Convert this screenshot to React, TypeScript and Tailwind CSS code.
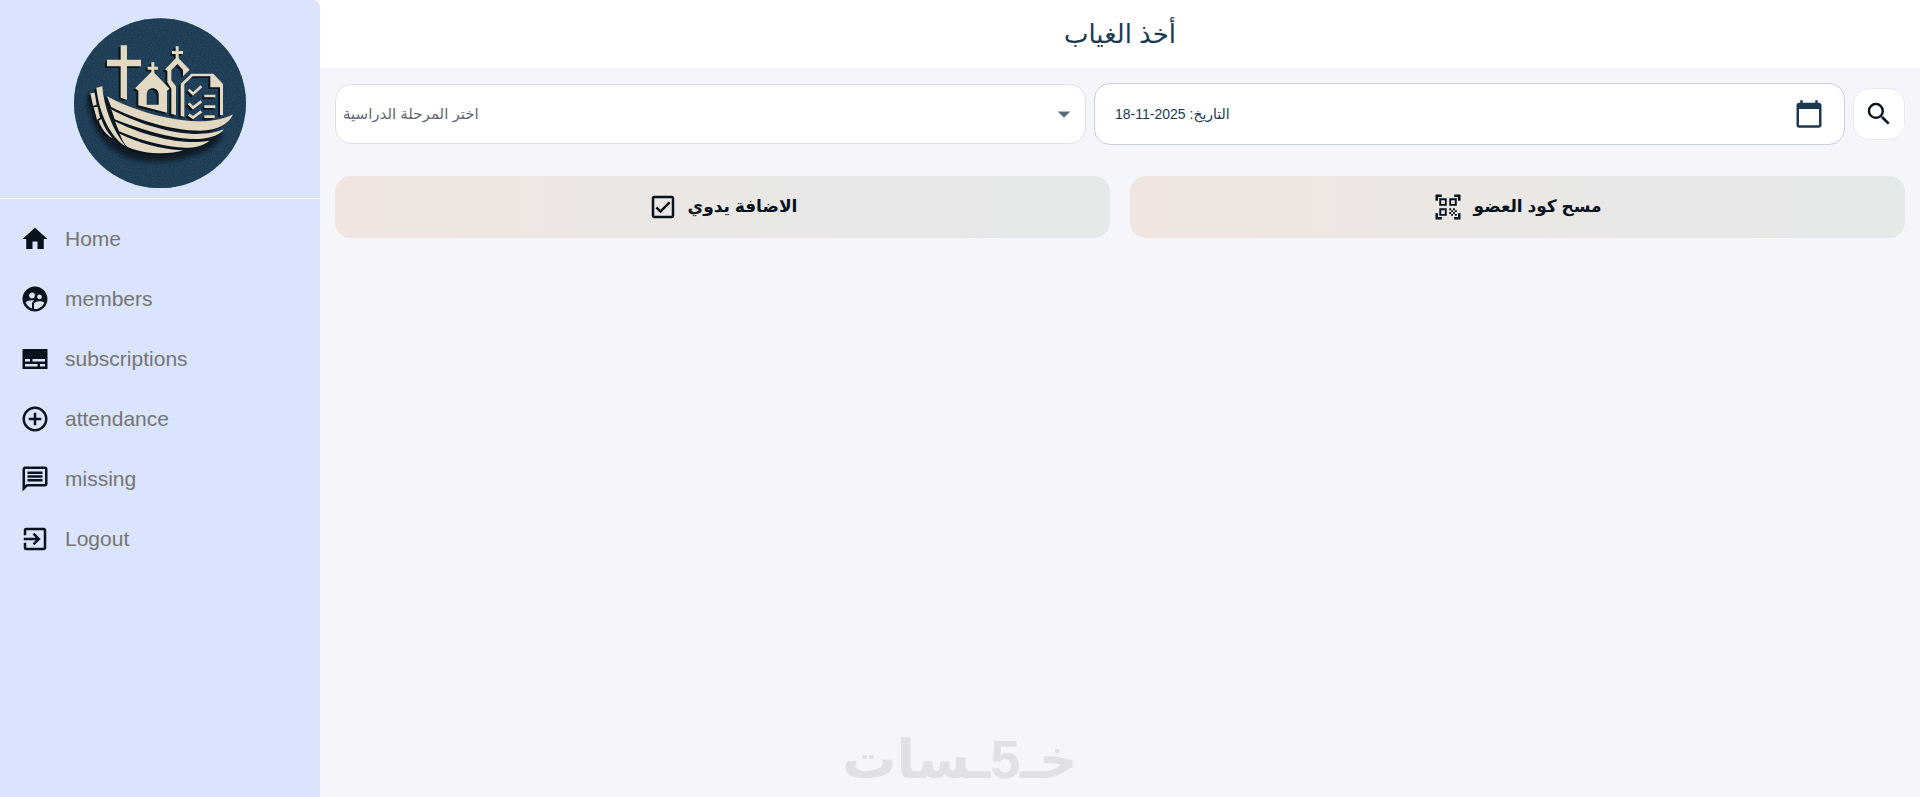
import type { ReactNode } from "react";
import {
  MdAddCircleOutline,
  MdArrowDropDown,
  MdCalendarToday,
  MdExitToApp,
  MdHome,
  MdOutlineCheckBox,
  MdOutlineMessage,
  MdQrCodeScanner,
  MdSearch,
  MdSupervisedUserCircle,
} from "react-icons/md";

const ICON_SIZE = 30;

interface NavItem {
  label: string;
  icon: ReactNode;
}

// Sharp-cornered subtitles icon, the md set only has the rounded one
const SubtitlesSharp = () => (
  <svg viewBox="0 0 24 24" width={ICON_SIZE} height={ICON_SIZE} fill="currentColor" aria-hidden="true">
    <path d="M22 4H2v16h20V4zM4 12h4v2H4v-2zm10 6H4v-2h10v2zm6 0h-4v-2h4v2zm0-4H10v-2h10v2z" />
  </svg>
);

const navItems: NavItem[] = [
  { label: "Home", icon: <MdHome size={ICON_SIZE} /> },
  { label: "members", icon: <MdSupervisedUserCircle size={ICON_SIZE} /> },
  { label: "subscriptions", icon: <SubtitlesSharp /> },
  { label: "attendance", icon: <MdAddCircleOutline size={ICON_SIZE} /> },
  { label: "missing", icon: <MdOutlineMessage size={ICON_SIZE} /> },
  { label: "Logout", icon: <MdExitToApp size={ICON_SIZE} /> },
];

const ArkShapes = () => (
  <>
    {/* Cross */}
    <path d="M182 135h19v43h42v20h-42v100l-19-6v-94h-41v-20h41z" />
    {/* Small church */}
    <path
      fillRule="evenodd"
      d="M274 186h9v13h11v9h-11v10l46 47-8 6v66l-86-22v-44l-10-7 49-50v-6h-11v-9h11zM260 313h36v-30c0-26-36-26-36 0z"
    />
    {/* Tall church */}
    <path d="M347 138h9v14h13v9h-13v13l33 34-20 20v-19l-17-18-18 18v31l14 18v86l-14-3v-76l-12-19v-34l-7-5 32-33v-13h-11v-9h11z" />
    {/* Checklist */}
    <path d="M362 347v-97l32-30h66l29 31v93l-9 1v-84h-29v-33h-53l-25 24v97z" />
    <path
      d="M386 268l13 13 25-23M386 309l13 13 25-19M386 343l13 9 25-19M433 287h33M433 319h33M433 349h31"
      fill="none"
      stroke="currentColor"
      strokeWidth="8"
    />
    {/* Hull */}
    <path d="M141 287c60 36 180 74 270 76 50 1 85-9 108-21-10 26-44 49-98 49-90 0-205-38-268-72z" />
    <path d="M154 327c60 35 160 70 246 74 40 1 66-5 92-14-18 23-58 31-100 29-80-4-170-37-228-59z" />
    <path d="M165 363c60 31 150 60 222 62 26 1 42-1 62-4-24 20-60 23-94 20-66-6-130-28-178-48z" />
    <path d="M179 400c56 27 120 46 190 50-40 14-120 12-166-10-10-8-18-24-24-40z" />
    <path d="M109 262l18-4c4 60 30 130 69 179-40-24-78-90-87-175z" />
    <path d="M91 279l13-2 6 36-11 3zM101 321l12-1 7 32-9 6zM116 361l8-5c8 24 20 42 34 58-18-10-34-28-42-53z" />
  </>
);

const ArkLogo = () => (
  <svg viewBox="42 53 516 511" className="w-[172px]" role="img" aria-label="Church ark">
    <defs>
      <filter id="soft" x="-20%" y="-20%" width="140%" height="140%">
        <feGaussianBlur stdDeviation="7" />
      </filter>
      <filter id="grain">
        <feTurbulence type="fractalNoise" baseFrequency="0.3" numOctaves="2" seed="4" />
        <feColorMatrix values="0 0 0 0 0.02  0 0 0 0 0.06  0 0 0 0 0.1  4 0 0 0 -1.6" />
        <feComposite in2="SourceGraphic" operator="in" />
      </filter>
    </defs>
    <ellipse cx="300" cy="308.500" rx="258" ry="255" fill="#1a3a56" />
    <ellipse cx="300" cy="308.500" rx="258" ry="255" filter="url(#grain)" />
    {/* Shadow under the hull */}
    <path
      d="M80 290l40-10 60 40 200 60 110 20c-20 40-60 64-150 80-70 10-130 0-170-24-50-34-80-90-90-166z"
      fill="#07131d"
      opacity="0.85"
      filter="url(#soft)"
    />
    <g className="text-[#07131d]" fill="currentColor" transform="translate(-6 5)">
      <ArkShapes />
    </g>
    <g className="text-[#e3d8c2]" fill="currentColor">
      <ArkShapes />
    </g>
  </svg>
);

const Sidebar = () => (
  <aside className="w-80 shrink-0 rounded-tr-lg bg-[#dae4fd]">
    <div className="flex justify-center border-b border-white pt-[18px] pb-2.5">
      <ArkLogo />
    </div>
    <nav className="pt-2.5">
      <ul>
        {navItems.map((item) => (
          <li key={item.label}>
            <a href="#" className="flex h-[60px] items-center gap-[15px] pl-5 text-[#06121c]">
              {item.icon}
              <span className="text-[21px] leading-7 text-[#757575]">{item.label}</span>
            </a>
          </li>
        ))}
      </ul>
    </nav>
  </aside>
);

const Filters = () => (
  <div className="grid grid-cols-[1fr_1fr_auto] items-center gap-2">
    <div className="grid items-center">
      <select
        aria-label="المرحلة الدراسية"
        defaultValue=""
        className="col-start-1 row-start-1 h-[60px] w-full appearance-none rounded-2xl border border-[#dfe1e6] bg-white px-[7px] text-[15px] text-[#5f6877]"
      >
        <option value="">اختر المرحلة الدراسية</option>
      </select>
      <MdArrowDropDown
        size={ICON_SIZE}
        className="pointer-events-none col-start-1 row-start-1 mr-[7px] justify-self-end text-[#5f6877]"
      />
    </div>
    <button
      type="button"
      className="flex h-[62px] items-center justify-between rounded-2xl border border-[#c9cedb] bg-white px-5 text-sm text-[#1b3a52]"
    >
      <span>التاريخ: 2025-11-18</span>
      <MdCalendarToday size={ICON_SIZE} />
    </button>
    <button
      type="button"
      aria-label="بحث"
      className="flex size-[52px] items-center justify-center rounded-2xl border border-[#e8eaf0] bg-white text-[#06121c]"
    >
      <MdSearch size={ICON_SIZE} />
    </button>
  </div>
);

interface ActionButtonProps {
  label: string;
  icon: ReactNode;
}

const ActionButton = ({ label, icon }: ActionButtonProps) => (
  <button
    type="button"
    className="flex h-[62px] items-center justify-center gap-2.5 rounded-2xl bg-linear-to-r from-[#f1e6df] to-[#e4e9ea] text-[17px] font-bold text-[#06121c]"
  >
    {icon}
    <span>{label}</span>
  </button>
);

export default function App() {
  return (
    <div className="flex min-h-screen bg-[#f4f6fc] font-['Liberation_Sans','DejaVu_Sans',sans-serif]">
      <Sidebar />
      <div className="flex flex-1 flex-col">
        <header className="flex h-[68px] items-center justify-center bg-white">
          <h1 className="text-[26px] leading-9 text-[#1b3a52]">أخذ الغياب</h1>
        </header>
        <main className="flex flex-1 flex-col px-[15px] pt-[15px]">
          <Filters />
          <div className="mt-[31px] grid grid-cols-2 gap-5">
            <ActionButton label="الاضافة يدوي" icon={<MdOutlineCheckBox size={ICON_SIZE} />} />
            <ActionButton label="مسح كود العضو" icon={<MdQrCodeScanner size={ICON_SIZE} />} />
          </div>
        </main>
      </div>
      {/* Watermark */}
      <div className="pointer-events-none fixed inset-x-0 bottom-0 text-center text-[54px] leading-[76px] font-bold text-[#dfe1e5]">
        خـ5ـسات
      </div>
    </div>
  );
}
